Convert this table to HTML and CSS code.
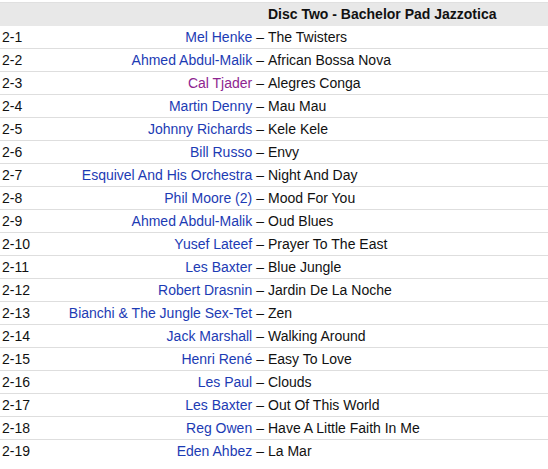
FILE: index.html
```html
<!DOCTYPE html>
<html>
<head>
<meta charset="utf-8">
<link rel="stylesheet" href="styles.css">
</head>
<body>
<div class="tracklist">
  <div class="row head">
    <div class="pos"></div>
    <div class="artist"></div>
    <div class="title">Disc Two - Bachelor Pad Jazzotica</div>
  </div>
  <div class="row"><div class="pos">2-1</div><div class="artist"><a class="link">Mel Henke</a> –</div><div class="title">The Twisters</div></div>
  <div class="row"><div class="pos">2-2</div><div class="artist"><a class="link">Ahmed Abdul-Malik</a> –</div><div class="title">African Bossa Nova</div></div>
  <div class="row"><div class="pos">2-3</div><div class="artist"><a class="link visited">Cal Tjader</a> –</div><div class="title">Alegres Conga</div></div>
  <div class="row"><div class="pos">2-4</div><div class="artist"><a class="link">Martin Denny</a> –</div><div class="title">Mau Mau</div></div>
  <div class="row"><div class="pos">2-5</div><div class="artist"><a class="link">Johnny Richards</a> –</div><div class="title">Kele Kele</div></div>
  <div class="row"><div class="pos">2-6</div><div class="artist"><a class="link">Bill Russo</a> –</div><div class="title">Envy</div></div>
  <div class="row"><div class="pos">2-7</div><div class="artist"><a class="link">Esquivel And His Orchestra</a> –</div><div class="title">Night And Day</div></div>
  <div class="row"><div class="pos">2-8</div><div class="artist"><a class="link">Phil Moore (2)</a> –</div><div class="title">Mood For You</div></div>
  <div class="row"><div class="pos">2-9</div><div class="artist"><a class="link">Ahmed Abdul-Malik</a> –</div><div class="title">Oud Blues</div></div>
  <div class="row"><div class="pos">2-10</div><div class="artist"><a class="link">Yusef Lateef</a> –</div><div class="title">Prayer To The East</div></div>
  <div class="row"><div class="pos">2-11</div><div class="artist"><a class="link">Les Baxter</a> –</div><div class="title">Blue Jungle</div></div>
  <div class="row"><div class="pos">2-12</div><div class="artist"><a class="link">Robert Drasnin</a> –</div><div class="title">Jardin De La Noche</div></div>
  <div class="row"><div class="pos">2-13</div><div class="artist"><a class="link">Bianchi &amp; The Jungle Sex-Tet</a> –</div><div class="title">Zen</div></div>
  <div class="row"><div class="pos">2-14</div><div class="artist"><a class="link">Jack Marshall</a> –</div><div class="title">Walking Around</div></div>
  <div class="row"><div class="pos">2-15</div><div class="artist"><a class="link">Henri René</a> –</div><div class="title">Easy To Love</div></div>
  <div class="row"><div class="pos">2-16</div><div class="artist"><a class="link">Les Paul</a> –</div><div class="title">Clouds</div></div>
  <div class="row"><div class="pos">2-17</div><div class="artist"><a class="link">Les Baxter</a> –</div><div class="title">Out Of This World</div></div>
  <div class="row"><div class="pos">2-18</div><div class="artist"><a class="link">Reg Owen</a> –</div><div class="title">Have A Little Faith In Me</div></div>
  <div class="row"><div class="pos">2-19</div><div class="artist"><a class="link">Eden Ahbez</a> –</div><div class="title">La Mar</div></div>
</div>
</body>
</html>
```
FILE: styles.css
```css
html, body {
  margin: 0;
  padding: 0;
  background: #fff;
}
body {
  padding-top: 2px;
  font-family: "Liberation Sans", Arial, sans-serif;
  font-size: 14px;
  color: #111;
}
.tracklist {
  width: 548px;
}
.row {
  display: grid;
  grid-template-columns: 64px 200px 1fr;
  height: 22px;
  line-height: 22px;
  border-bottom: 1px solid #dedede;
  white-space: nowrap;
}
.row:last-child {
  border-bottom: none;
}
.row.head {
  height: 23px;
  line-height: 23px;
  background: #e8e8e8;
  border-top: 1px solid #e0e0e0;
  border-bottom: none;
  font-weight: bold;
  color: #111;
}
.pos {
  padding-left: 2px;
}
.artist {
  text-align: right;
  overflow: visible;
  display: flex;
  justify-content: flex-end;
  gap: 4px;
}
.title {
  padding-left: 4px;
}
.link {
  color: #1c3bb4;
  text-decoration: none;
}
.link.visited {
  color: #8e2590;
}
```
